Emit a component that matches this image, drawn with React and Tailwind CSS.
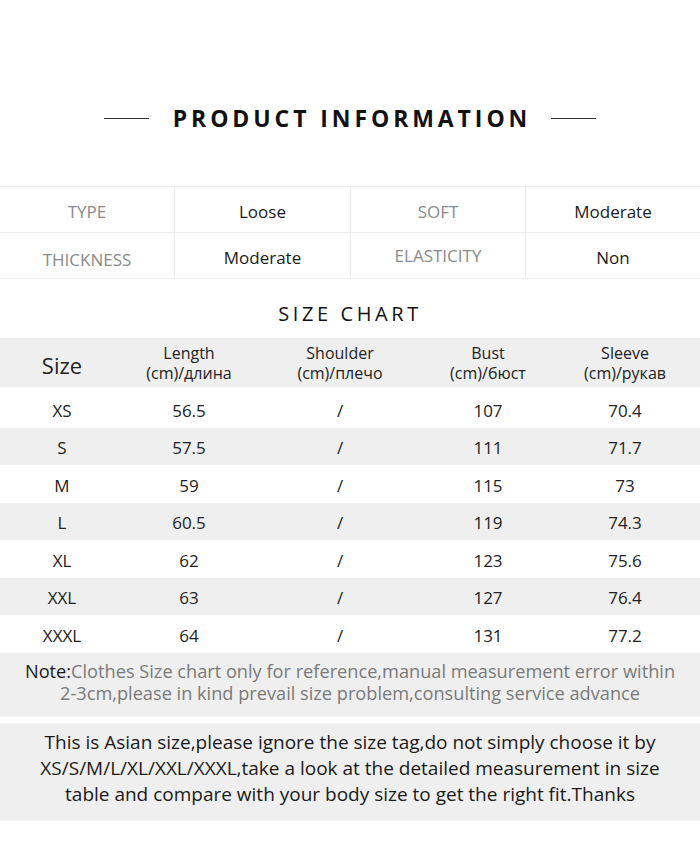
const info = [
  ['TYPE', 'Loose', 'SOFT', 'Moderate'],
  ['THICKNESS', 'Moderate', 'ELASTICITY', 'Non'],
];

const sizes = [
  ['XS', '56.5', '/', '107', '70.4'],
  ['S', '57.5', '/', '111', '71.7'],
  ['M', '59', '/', '115', '73'],
  ['L', '60.5', '/', '119', '74.3'],
  ['XL', '62', '/', '123', '75.6'],
  ['XXL', '63', '/', '127', '76.4'],
  ['XXXL', '64', '/', '131', '77.2'],
];

const cols = 'grid grid-cols-[124px_130px_172px_124px_150px]';

export default function App() {
  return (
    <div className="w-[700px] h-[843px] bg-white text-[#222] font-['Open_Sans',sans-serif] overflow-hidden">
      <div className="h-[186px] pt-[101px] flex justify-center items-start gap-6">
        <div className="w-[45px] h-px bg-[#333] mt-[17px]" />
        <h1 className="text-[23px] leading-[34px] font-bold tracking-[0.17em] text-[#111] mr-[-0.17em]">
          PRODUCT INFORMATION
        </h1>
        <div className="w-[45px] h-px bg-[#333] mt-[17px]" />
      </div>

      <div className="border-t border-[#ececec]">
        {info.map((row, i) => (
          <div key={i} className="grid grid-cols-[175px_176px_175px_174px] border-b border-[#ececec]">
            {row.map((cell, j) => (
              <div
                key={j}
                className={`h-[45px] flex items-center justify-center text-[17px] ${
                  j % 2 === 0 ? 'text-[#8a8a8a]' : 'text-[#1a1a1a]'
                } ${j < 3 ? 'border-r border-[#ececec]' : ''} ${
                  i === 1 && j === 0 ? 'pt-[8px]' : i === 1 && j === 2 ? 'pt-0' : 'pt-[4px]'
                }`}
              >
                {cell}
              </div>
            ))}
          </div>
        ))}
      </div>

      <h2 className="text-center text-[20px] tracking-[0.18em] text-[#111] mt-[20px] h-[39px] leading-[30px]">
        SIZE CHART
      </h2>

      <div className={`${cols} bg-[#efefef] h-[49px] items-center text-center text-[16px] leading-[20px] text-[#222]`}>
        <div className="text-[22px] pt-1">Size</div>
        <div>Length<br />(cm)/длина</div>
        <div>Shoulder<br />(cm)/плечо</div>
        <div>Bust<br />(cm)/бюст</div>
        <div>Sleeve<br />(cm)/рукав</div>
      </div>

      <div className="pt-[3px]">
        {sizes.map((row, i) => (
          <div
            key={row[0]}
            className={`${cols} h-[37.5px] items-center text-center text-[17px] text-[#222] pt-[3px] ${
              i % 2 === 1 ? 'bg-[#efefef]' : ''
            }`}
          >
            {row.map((c, j) => (
              <div key={j}>{c}</div>
            ))}
          </div>
        ))}
      </div>

      <div className="bg-[#efefef] h-[64px] flex flex-col justify-center text-center text-[18.2px] leading-[22px] text-[#7a7a7a] pb-[6px]">
        <p>
          <span className="text-[#1a1a1a]">Note:</span>Clothes Size chart only for reference,manual measurement error within
          <br />
          2-3cm,please in kind prevail size problem,consulting service advance
        </p>
      </div>

      <div className="bg-[#efefef] mt-[6px] h-[98px] flex flex-col justify-center text-center text-[19px] leading-[26px] text-[#1a1a1a] pb-[8px]">
        <p>
          This is Asian size,please ignore the size tag,do not simply choose it by
          <br />
          XS/S/M/L/XL/XXL/XXXL,take a look at the detailed measurement in size
          <br />
          table and compare with your body size to get the right fit.Thanks
        </p>
      </div>
    </div>
  );
}
